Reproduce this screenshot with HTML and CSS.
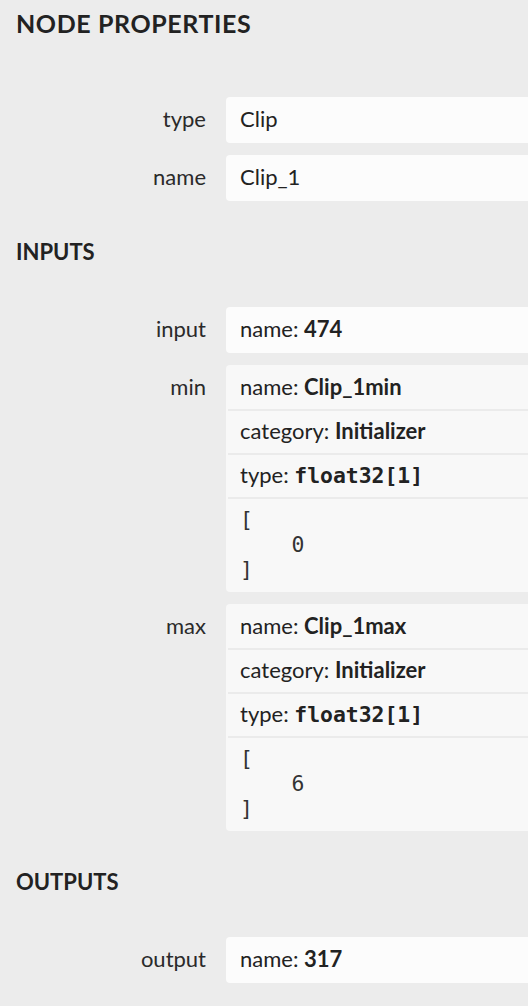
FILE: index.html
```html
<!DOCTYPE html>
<html lang="en">
<head>
    <meta charset="UTF-8">
    <meta name="viewport" content="width=device-width, initial-scale=1.0">
    <title>Node Properties</title>
    <link rel="stylesheet" href="styles.css">
</head>
<body>
    <div class="sidebar">
        <div class="sidebar-title">Node Properties</div>

        <div class="sidebar-list first">
            <div class="sidebar-item">
                <div class="item-name">type</div>
                <div class="item-value">
                    <div class="value-line">Clip</div>
                </div>
            </div>
            <div class="sidebar-item">
                <div class="item-name">name</div>
                <div class="item-value">
                    <div class="value-line">Clip_1</div>
                </div>
            </div>
        </div>

        <div class="sidebar-section">Inputs</div>

        <div class="sidebar-list">
            <div class="sidebar-item">
                <div class="item-name">input</div>
                <div class="item-value">
                    <div class="value-line">name: <b>474</b></div>
                </div>
            </div>
            <div class="sidebar-item">
                <div class="item-name">min</div>
                <div class="item-value multi">
                    <div class="value-line">name: <b>Clip_1min</b></div>
                    <div class="value-line border">category: <b>Initializer</b></div>
                    <div class="value-line border">type: <code>float32[1]</code></div>
                    <pre class="value-line border">[
    0
]</pre>
                </div>
            </div>
            <div class="sidebar-item">
                <div class="item-name">max</div>
                <div class="item-value multi">
                    <div class="value-line">name: <b>Clip_1max</b></div>
                    <div class="value-line border">category: <b>Initializer</b></div>
                    <div class="value-line border">type: <code>float32[1]</code></div>
                    <pre class="value-line border">[
    6
]</pre>
                </div>
            </div>
        </div>

        <div class="sidebar-section">Outputs</div>

        <div class="sidebar-list">
            <div class="sidebar-item">
                <div class="item-name">output</div>
                <div class="item-value">
                    <div class="value-line">name: <b>317</b></div>
                </div>
            </div>
        </div>
    </div>
</body>
</html>
```

FILE: styles.css
```css
html, body {
    margin: 0;
    background-color: #ececec;
    overflow: hidden;
}
body {
    font-family: Lato, "Open Sans", sans-serif;
    font-size: 22px;
    line-height: 26px;
    color: #222;
}
.sidebar {
    padding: 8px 0 0 16px;
}
.sidebar-title {
    font-size: 25px;
    line-height: 30px;
    font-weight: bold;
    text-transform: uppercase;
    letter-spacing: 0.6px;
    color: #222;
}
.sidebar-section {
    margin-top: 38px;
    font-weight: bold;
    text-transform: uppercase;
    color: #222;
}
.sidebar-list {
    display: flex;
    flex-direction: column;
    gap: 12px;
    margin-top: 42px;
}
.sidebar-list.first {
    margin-top: 59px;
}
.sidebar-item {
    display: flex;
    gap: 20px;
}
.item-name {
    width: 190px;
    flex-shrink: 0;
    padding-top: 9px;
    text-align: right;
    color: #2a2a2a;
}
.item-value {
    flex: 1;
    min-width: 0;
    padding: 2px 0 2px 2px;
    background-color: #fcfcfc;
    border-radius: 4px 0 0 4px;
}
.item-value.multi {
    background-color: #f8f8f8;
}
.value-line {
    padding: 7px 12px 9px 12px;
}
.value-line.border {
    border-top: 2px solid #ebebeb;
}
.value-line b {
    font-weight: bold;
}
code {
    font-family: "DejaVu Sans Mono", monospace;
    font-size: 21.4px;
    line-height: 1;
    font-weight: bold;
}
pre.value-line {
    margin: 0;
    padding: 8px 12px;
    font-family: "DejaVu Sans Mono", monospace;
    font-size: 21.4px;
    line-height: 25px;
    color: #333;
}
```
